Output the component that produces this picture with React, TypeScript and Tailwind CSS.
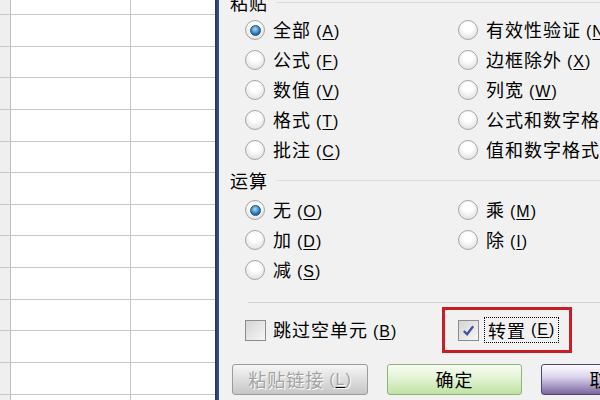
import React from "react";

/**
 * Excel「选择性粘贴」对话框截图复刻：左侧是表格网格，右侧是对话框本体。
 */

const cjk = "font-['Noto_Sans_CJK_SC','Noto_Sans_CJK_JP',sans-serif]";

function Key({ k }: { k: string }) {
  return (
    <span className="ml-[5px] font-['Liberation_Sans',sans-serif] text-[16px]">
      (<span className="underline underline-offset-2">{k}</span>)
    </span>
  );
}

function Radio({ checked }: { checked?: boolean }) {
  return (
    <span className="flex h-[20px] w-[20px] shrink-0 items-center justify-center rounded-full border border-[#a6a6a6] bg-[radial-gradient(circle_at_50%_35%,#ffffff_30%,#d6d6d6)]">
      {checked && (
        <span className="h-[11px] w-[11px] rounded-full border border-[#1d4f80] bg-[radial-gradient(circle_at_45%_35%,#a6dcf7,#2a78b8_60%,#16436f)]" />
      )}
    </span>
  );
}

function Option({ label, k, checked }: { label: string; k: string; checked?: boolean }) {
  return (
    <div className="flex h-[30px] items-center gap-[8px] whitespace-nowrap">
      <Radio checked={checked} />
      <span>
        {label}
        <Key k={k} />
      </span>
    </div>
  );
}

function Checkbox({ checked }: { checked?: boolean }) {
  return (
    <span className="flex h-[21px] w-[21px] shrink-0 items-center justify-center border border-[#8c8c8c] bg-[linear-gradient(135deg,#d4d4d4,#f7f7f7)]">
      {checked && (
        <svg viewBox="0 0 16 16" className="h-[15px] w-[15px]" aria-hidden="true">
          <path d="M3 8.5 L6.5 12 L13 3.5" fill="none" stroke="#3b4fa8" strokeWidth="2.4" />
        </svg>
      )}
    </span>
  );
}

function GroupTitle({ text, className = "" }: { text: string; className?: string }) {
  return (
    <div className={`flex items-center gap-[8px] pl-[11px] ${className}`}>
      <span>{text}</span>
      <span className="h-px flex-1 bg-[#d6dde3]" />
    </div>
  );
}

const pasteOptions: [string, string, string, string][] = [
  ["全部", "A", "有效性验证", "N"],
  ["公式", "F", "边框除外", "X"],
  ["数值", "V", "列宽", "W"],
  ["格式", "T", "公式和数字格式", "R"],
  ["批注", "C", "值和数字格式", "U"],
];

export default function App() {
  const sheetRows = Array.from({ length: 13 }, (_, i) => i);

  return (
    <div className={`flex h-[400px] w-[600px] overflow-hidden bg-white text-[18px] tracking-[1px] text-black ${cjk}`}>
      {/* 表格网格 */}
      <div className="flex h-full w-[215px] shrink-0 flex-col overflow-hidden bg-white">
        <div className="flex h-[15px] shrink-0 border-b border-[#c8c8c8]">
          <div className="w-[11px] border-r border-[#bdbdbd] bg-[#efefef]" />
          <div className="w-[120px] border-r border-[#c8c8c8]" />
          <div className="flex-1" />
        </div>
        {sheetRows.map((r) => (
          <div key={r} className="flex h-[31.65px] shrink-0 border-b border-[#c8c8c8]">
            <div className="w-[11px] border-r border-[#bdbdbd] bg-[#efefef]" />
            <div className="w-[120px] border-r border-[#c8c8c8]" />
            <div className="flex-1" />
          </div>
        ))}
      </div>

      {/* 对话框左边框 */}
      <div className="w-[4px] shrink-0 bg-[linear-gradient(90deg,#22335c,#3d5490)]" />

      {/* 对话框 */}
      <div className="flex min-w-0 flex-1 flex-col overflow-hidden bg-[#f1f1f1]">
        <GroupTitle text="粘贴" className="-mt-[8px] h-[20px]" />

        <div className="mt-[3px] grid grid-cols-[213px_1fr] pl-[26px]">
          {pasteOptions.map(([l, lk, r, rk], i) => (
            <React.Fragment key={l}>
              <Option label={l} k={lk} checked={i === 0} />
              <Option label={r} k={rk} />
            </React.Fragment>
          ))}
        </div>

        <GroupTitle text="运算" className="h-[30px]" />

        <div className="grid grid-cols-[213px_1fr] pl-[26px]">
          <Option label="无" k="O" checked />
          <Option label="乘" k="M" />
          <Option label="加" k="D" />
          <Option label="除" k="I" />
          <Option label="减" k="S" />
        </div>

        <div className="ml-[29px] mt-[17px] h-px shrink-0 bg-[#d4d4d4]" />

        <div className="mt-[4px] flex h-[46px] shrink-0 items-center pl-[26px]">
          <div className="flex w-[197px] shrink-0 items-center gap-[7px] whitespace-nowrap">
            <Checkbox />
            <span>
              跳过空单元
              <Key k="B" />
            </span>
          </div>
          <div className="flex h-[46px] w-[130px] shrink-0 items-center gap-[5px] border-[3px] border-[#c81e28] pl-[13px]">
            <Checkbox checked />
            <span className="flex h-[26px] items-center whitespace-nowrap border border-dotted border-black px-[3px]">
              转置
              <Key k="E" />
            </span>
          </div>
        </div>

        <div className="mt-[11px] flex shrink-0 gap-[19px] pl-[13px]">
          <button className="flex h-[31px] w-[136px] shrink-0 items-center justify-center rounded-[3px] border border-[#9c9c9c] bg-[linear-gradient(#f6f6f6,#dedede_50%,#c6c6c6)] text-[#a2a2a2] [text-shadow:1px_1px_0_#ffffff]">
            粘贴链接
            <span className="ml-[5px] font-['Liberation_Sans',sans-serif] text-[16px]">
              (<span className="underline decoration-black underline-offset-2">L</span>)
            </span>
          </button>
          <button className="flex h-[31px] w-[135px] shrink-0 items-center justify-center rounded-[3px] border border-[#8db676] bg-[linear-gradient(#f7fcf1,#e3f3d4_45%,#bfe2a3)]">
            确定
          </button>
          <button className="flex h-[31px] w-[135px] shrink-0 items-center justify-center rounded-[3px] border border-[#4f4270] bg-[linear-gradient(#fdfcff,#ddd5ee_40%,#7a689e)]">
            取消
          </button>
        </div>
      </div>
    </div>
  );
}
